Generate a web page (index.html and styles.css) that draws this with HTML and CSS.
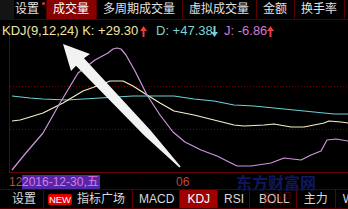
FILE: index.html
```html
<!DOCTYPE html>
<html lang="zh-CN">
<head>
<meta charset="utf-8">
<title>KDJ</title>
<link rel="stylesheet" href="styles.css">
</head>
<body>
<div class="screen">
  <div class="topbar">
    <div class="stub"></div>
    <div class="tab first">设置<span class="dot"></span></div>
    <div class="tab active">成交量</div>
    <div class="tab">多周期成交量</div>
    <div class="tab">虚拟成交量</div>
    <div class="tab">金额</div>
    <div class="tab">换手率</div>
  </div>

  <div class="chart">
    <svg class="plot" width="348" height="150" viewBox="0 20 348 150">
      <line x1="9.5" y1="20" x2="9.5" y2="169" stroke="#6a0000" stroke-width="1"/>
      <line x1="9" y1="169.5" x2="348" y2="169.5" stroke="#6a0000" stroke-width="1"/>
      <line x1="10" y1="83.5" x2="348" y2="83.5" stroke="#7a0000" stroke-width="1" stroke-dasharray="1 2"/>
      <line x1="10" y1="126.5" x2="348" y2="126.5" stroke="#7a0000" stroke-width="1" stroke-dasharray="1 2"/>
      <polyline class="ln-d" points="12,93 30,95 43,96 67,97 100,95 133,93 147,93 174,93 194,96 214,98 234,102 254,103 274,105 294,107 314,109 334,111 348,111"/>
      <polyline class="ln-k" points="12,118 20,117 30,114 43,110 63,100 83,88 100,82 110,78 123,78 133,83 147,92 160,100 174,108 194,112 214,117 234,122 244,123 264,122 274,121 291,124 304,124 314,122 324,120 329,118 341,119 348,120"/>
      <polyline class="ln-j" points="12,167 25,151 43,130 60,100 78,70 95,57 108,50 113,46 117,45 121,46 126,52 135,68 147,92 160,112 173,129 185,139 201,147 217,153 237,163 251,163 271,160 284,155 301,157 311,152 321,148 327,137 336,136 348,138"/>
      <polygon class="pointer" points="63,41 90,51 84,55.3 150,126.8 180.6,163.4 179.4,164.6 144,132.2 76,62.7 71,68"/>
    </svg>
    <div class="legend">
      <span class="lv lv-k">KDJ(9,12,24) K: +29.30</span>
      <svg class="arr arr-k" width="7" height="11" viewBox="0 0 7 11"><path d="M3.5 0 L7 5 L4.5 5 L4.5 11 L2.5 11 L2.5 5 L0 5Z" fill="#e84040"/></svg>
      <span class="lv lv-d">D: +47.38</span>
      <svg class="arr arr-d" width="7" height="11" viewBox="0 0 7 11"><path d="M3.5 11 L7 6 L4.5 6 L4.5 0 L2.5 0 L2.5 6 L0 6Z" fill="#70d0e0"/></svg>
      <span class="lv lv-j">J: -6.86</span>
      <svg class="arr" width="7" height="11" viewBox="0 0 7 11"><path d="M3.5 0 L7 5 L4.5 5 L4.5 11 L2.5 11 L2.5 5 L0 5Z" fill="#e84040"/></svg>
    </div>
  </div>

  <div class="daterow">
    <span class="tick first">12</span>
    <span class="datebox">2016-12-30,五</span>
    <span class="tick mid">06</span>
    <span class="watermark">东方财富网</span>
  </div>

  <div class="bottombar">
    <div class="btab b-set">设置</div>
    <div class="btab b-sq"><span class="new">NEW</span><span>指标广场</span></div>
    <div class="btab b-macd">MACD</div>
    <div class="btab b-kdj active">KDJ</div>
    <div class="btab b-rsi">RSI</div>
    <div class="btab b-boll">BOLL</div>
    <div class="btab b-zl">主力</div>
    <div class="btab b-w">W</div>
    <span class="wm-red">知识</span>
  </div>

  <div class="strip"><span class="seg seg1"></span><span class="seg seg2"></span></div>
</div>
</body>
</html>
```

FILE: styles.css
```css
html, body {
  margin: 0;
  padding: 0;
  background: #000;
}

.screen {
  width: 348px;
  height: 209px;
  overflow: hidden;
  background: #000;
  font-family: "Liberation Sans", "Noto Sans CJK SC", sans-serif;
  font-size: 12px;
  color: #dcdcdc;
}

/* top tab bar */
.topbar {
  display: flex;
  height: 19px;
  line-height: 19px;
  border-bottom: 1px solid #4a0000;
  white-space: nowrap;
}

.stub {
  width: 14px;
  flex: none;
  background: #141414;
}

.tab {
  position: relative;
  flex: none;
  padding: 0 7px 0 6px;
  border-right: 1px solid #5a0000;
  color: #e2e2e2;
}

.tab.first {
  padding-left: 1px;
}

.tab.active {
  background: #880000;
  color: #ffffff;
}

.dot {
  position: absolute;
  left: 28px;
  top: 2px;
  width: 3px;
  height: 3px;
  border-radius: 50%;
  background: #e83030;
}

/* chart */
.chart {
  position: relative;
  height: 150px;
}

.plot {
  position: absolute;
  left: 0;
  top: 0;
  display: block;
}

.ln-k, .ln-d, .ln-j {
  fill: none;
  stroke-width: 1.2;
  stroke-linejoin: round;
}

.ln-k { stroke: #f2f0c4; }
.ln-d { stroke: #6cd0d4; }
.ln-j { stroke: #cc96dc; }

.pointer {
  fill: #f2f2f2;
}

.legend {
  position: relative;
  display: flex;
  align-items: center;
  height: 16px;
  margin-top: 3px;
  padding-left: 2px;
  line-height: 16px;
  font-size: 13px;
  white-space: nowrap;
}

.lv {
  flex: none;
}

.lv-k {
  width: 138px;
  color: #efe6a6;
}

.lv-d {
  width: 55px;
  color: #7fd4d4;
}

.lv-j {
  width: 43px;
  color: #d27ad2;
}

.arr {
  flex: none;
  display: block;
}

.arr-k { margin-right: 9px; }
.arr-d { margin-right: 6px; }

/* date row */
.daterow {
  position: relative;
  display: flex;
  height: 16px;
  white-space: nowrap;
}

.tick {
  margin-top: 2px;
  line-height: 14px;
  color: #c24a32;
}

.tick.first {
  width: 13px;
  padding-left: 9px;
}

.tick.mid {
  margin-left: 76px;
}

.datebox {
  width: 78px;
  height: 14px;
  margin-top: 2px;
  line-height: 14px;
  background: #5228a6;
  color: #e274e2;
}

.watermark {
  position: absolute;
  left: 236px;
  top: 2px;
  font-size: 16px;
  line-height: 18px;
  font-weight: bold;
  color: #0e1860;
}

/* bottom bar */
.bottombar {
  position: relative;
  display: flex;
  height: 18px;
  line-height: 18px;
  border-top: 1px solid #500000;
  white-space: nowrap;
}

.btab {
  flex: none;
  border-right: 1px solid #600000;
  color: #dadada;
}

.b-set { padding: 0 7px 0 12px; }

.b-sq {
  display: flex;
  align-items: center;
  gap: 5px;
  padding: 0 7px 0 4px;
}

.b-macd { padding: 0 5px 0 6px; }
.b-kdj { padding: 0 7px; }
.b-rsi { padding: 0 5px 0 6px; }
.b-boll { padding: 0 6px 0 9px; }
.b-zl { padding: 0 7px; }
.b-w { padding: 0 0 0 7px; border-right: none; }

.btab.active {
  background: #a00000;
  color: #ffffff;
}

.new {
  width: 24px;
  height: 11px;
  line-height: 11px;
  border-radius: 2px;
  background: #e00000;
  color: #ffffff;
  font-size: 9.5px;
  text-align: center;
}

.wm-red {
  position: absolute;
  left: 262px;
  top: 0;
  font-size: 15px;
  line-height: 18px;
  color: rgba(190, 0, 0, 0.4);
}

/* bottom strip */
.strip {
  display: flex;
  height: 3px;
  border-top: 1px solid #4a0000;
}

.seg {
  display: block;
  height: 3px;
  background: #a00000;
}

.seg1 {
  margin-left: 8px;
  width: 64px;
}

.seg2 {
  margin-left: 108px;
  width: 37px;
}
```
